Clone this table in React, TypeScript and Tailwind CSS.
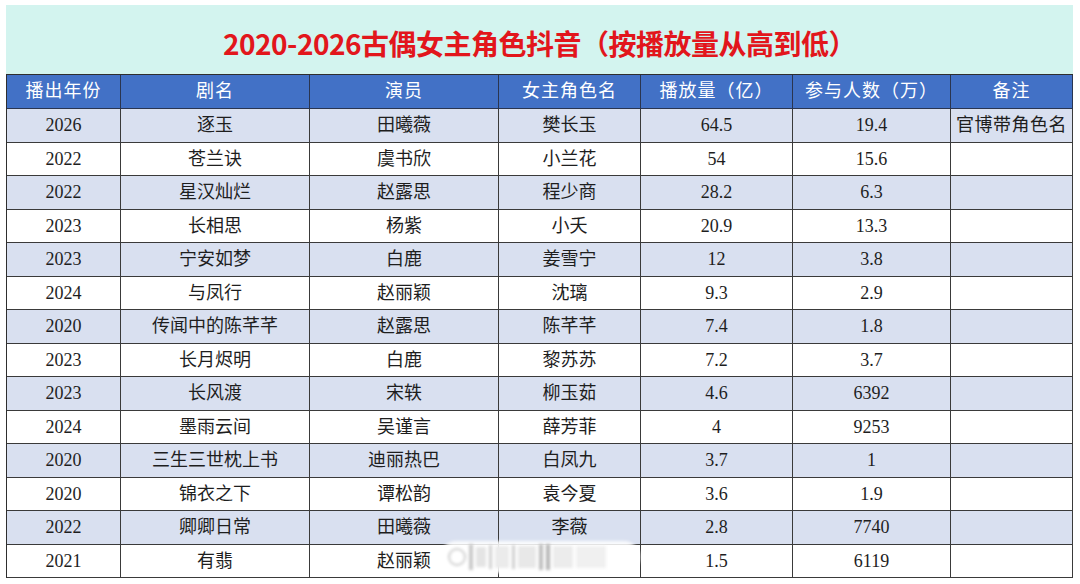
const COLUMNS = ["播出年份", "剧名", "演员", "女主角色名", "播放量（亿）", "参与人数（万）", "备注"];

type Row = [string, string, string, string, string, string, string];

const ROWS: Row[] = [
  ["2026", "逐玉", "田曦薇", "樊长玉", "64.5", "19.4", "官博带角色名"],
  ["2022", "苍兰诀", "虞书欣", "小兰花", "54", "15.6", ""],
  ["2022", "星汉灿烂", "赵露思", "程少商", "28.2", "6.3", ""],
  ["2023", "长相思", "杨紫", "小夭", "20.9", "13.3", ""],
  ["2023", "宁安如梦", "白鹿", "姜雪宁", "12", "3.8", ""],
  ["2024", "与凤行", "赵丽颖", "沈璃", "9.3", "2.9", ""],
  ["2020", "传闻中的陈芊芊", "赵露思", "陈芊芊", "7.4", "1.8", ""],
  ["2023", "长月烬明", "白鹿", "黎苏苏", "7.2", "3.7", ""],
  ["2023", "长风渡", "宋轶", "柳玉茹", "4.6", "6392", ""],
  ["2024", "墨雨云间", "吴谨言", "薛芳菲", "4", "9253", ""],
  ["2020", "三生三世枕上书", "迪丽热巴", "白凤九", "3.7", "1", ""],
  ["2020", "锦衣之下", "谭松韵", "袁今夏", "3.6", "1.9", ""],
  ["2022", "卿卿日常", "田曦薇", "李薇", "2.8", "7740", ""],
  ["2021", "有翡", "赵丽颖", "", "1.5", "6119", ""],
];

const GRID = "grid grid-cols-[114px_189px_189px_142px_152px_158px_1fr]";

export default function App() {
  return (
    <div className="h-[584px] w-[1080px] bg-white px-[6px] pt-[5px]">
      <div className="relative w-[1067px]">
        <div className="flex h-[69px] items-center justify-center bg-[#d3f4ef] pt-[6px]">
          <h1
            className="text-[28px] font-bold tracking-[-0.5px] text-[#e2161c]"
            style={{ fontFamily: '"Noto Sans CJK SC", sans-serif' }}
          >
            2020-2026古偶女主角色抖音（按播放量从高到低）
          </h1>
        </div>

        <div
          className="border-l border-t border-[#2e2e2e] text-[18px] text-[#1e1e1e]"
          style={{ fontFamily: '"Liberation Serif", "Noto Sans CJK SC", serif' }}
        >
          <div className={`${GRID} h-[34px] bg-[#4271c6] text-white`}>
            {COLUMNS.map((label) => (
              <div
                key={label}
                className="flex items-center justify-center border-b border-r border-[#2a3550] tracking-[1px]"
              >
                {label}
              </div>
            ))}
          </div>

          {ROWS.map((row, i) => (
            <div
              key={i}
              className={`${GRID} h-[33.5px] ${i % 2 === 0 ? "bg-[#d9e0f0]" : "bg-white"}`}
            >
              {row.map((cell, j) => (
                <div
                  key={j}
                  className={`flex items-center justify-center border-b border-r border-[#3a3a3a] leading-none ${
                    j === 6 ? "tracking-[0.5px]" : ""
                  }`}
                >
                  {cell}
                </div>
              ))}
            </div>
          ))}
        </div>

        {/* blurred watermark */}
        <div className="absolute left-[434px] top-[536px] flex h-[32px] w-[200px] items-center gap-[3px] rounded-full bg-white/85 px-2 blur-[1.5px]">
          <span className="h-[18px] w-[18px] rounded-full border-2 border-[#cfcfcf]" />
          <span className="h-[26px] w-[4px] bg-[#c8c8c8]" />
          <span className="h-[20px] w-[10px] bg-[#e4e4e4]" />
          <span className="h-[24px] w-[3px] bg-[#d0d0d0]" />
          <span className="h-[22px] w-[14px] bg-[#ebebeb]" />
          <span className="h-[24px] w-[3px] bg-[#cfcfcf]" />
          <span className="h-[22px] w-[18px] bg-[#e8e8e8]" />
          <span className="h-[26px] w-[4px] bg-[#bdbdbd]" />
          <span className="h-[26px] w-[4px] bg-[#b5b5b5]" />
          <span className="h-[22px] w-[20px] bg-[#ececec]" />
          <span className="h-[22px] w-[30px] bg-[#f0f0f0]" />
        </div>
      </div>
    </div>
  );
}
